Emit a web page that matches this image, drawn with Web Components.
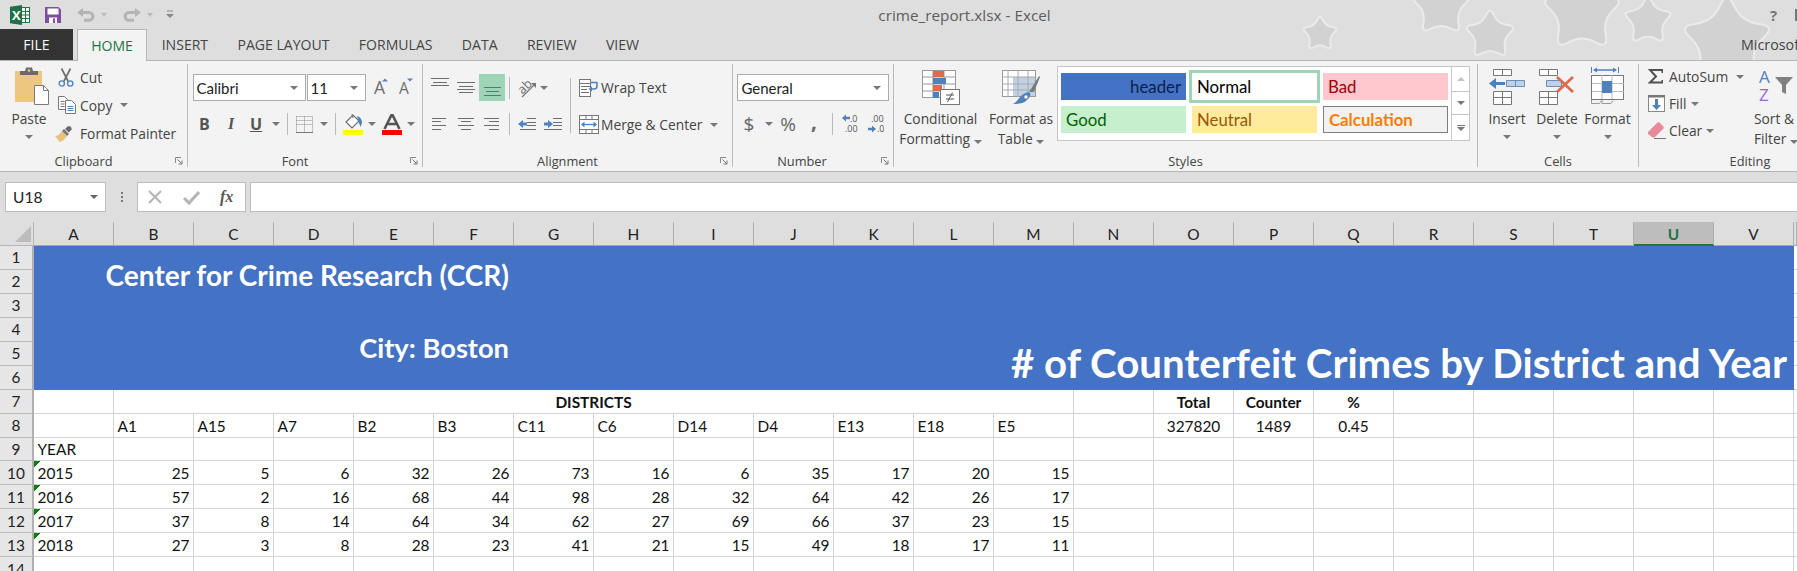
<!DOCTYPE html>
<html>
<head>
<meta charset="utf-8">
<title>crime_report.xlsx - Excel</title>
<style>
html, body { margin: 0; width: 1797px; height: 571px; overflow: hidden; background: #dedede; }
body { font-family: "Open Sans", "Liberation Sans", sans-serif; display: flex; flex-direction: column; }
</style>
</head>
<body>
<xl-header></xl-header>
<xl-ribbon></xl-ribbon>
<xl-formula-bar></xl-formula-bar>
<xl-sheet></xl-sheet>

<script>
const star = (cx, cy, r) => {
    // rounded five point star: curves through the midpoints of a spiky outline
    const pts = [];
    for (let i = 0; i < 10; i++) {
        const a = -Math.PI / 2 + i * Math.PI / 5;
        const d = i % 2 ? r * 0.62 : r * 1.3;
        pts.push([cx + d * Math.cos(a), cy + d * Math.sin(a)]);
    }
    const mid = (p, q) => [(p[0] + q[0]) / 2, (p[1] + q[1]) / 2];
    const start = mid(pts[9], pts[0]);
    let d = `M${start[0].toFixed(1)} ${start[1].toFixed(1)}`;
    pts.forEach((p, i) => {
        const m = mid(p, pts[(i + 1) % 10]);
        d += `Q${p[0].toFixed(1)} ${p[1].toFixed(1)} ${m[0].toFixed(1)} ${m[1].toFixed(1)}`;
    });
    return `<path d="${d}Z"/>`;
};

class XlHeader extends HTMLElement {
    constructor() {
        super();
        this.attachShadow({ mode: 'open' });
        const tabs = ['INSERT', 'PAGE LAYOUT', 'FORMULAS', 'DATA', 'REVIEW', 'VIEW'];
        this.shadowRoot.innerHTML = `
            <style>
                :host { display: block; height: 60px; position: relative; background: #dedede; color: #444; font-size: 13.6px; }
                .stars { position: absolute; left: 0; top: 0; fill: #d2d2d2; stroke: #ebebeb; stroke-width: 2; }
                .title { position: relative; height: 29px; display: flex; align-items: center; }
                .qat { display: flex; align-items: center; width: 0; white-space: nowrap; }
                .qat > * { flex: none; }
                .name { flex: 1; text-align: center; color: #5c5c5c; font-size: 15.3px; margin-left: 159px; }
                .help { color: #777; font-weight: 700; font-size: 15px; width: 27px; display: flex; justify-content: space-between; align-items: center; }
                .help i { width: 2px; height: 12px; background: #777; }
                .caret { display: inline-block; border: 3.5px solid transparent; border-top: 4px solid #bbb; border-bottom: 0; }
                .strip { position: relative; height: 31px; display: flex; align-items: stretch; }
                .tab { display: flex; align-items: center; padding: 0 14.7px; color: #444; white-space: nowrap; font-size: 14.05px; }
                .file { width: 73px; box-sizing: border-box; justify-content: center; background: #333; color: #fff; padding: 0; }
                .home { width: 70px; box-sizing: border-box; justify-content: center; padding: 0; margin: 0 0 -1px 4px; background: #f3f3f3; color: #217346;
                        border: 1px solid #b5b5b5; border-bottom: 0; position: relative; z-index: 1; }
                .account { margin-left: auto; width: 56px; overflow: hidden; align-self: center; white-space: nowrap; color: #444; font-size: 14.3px; }
            </style>
            <svg class="stars" width="1797" height="60">
                ${star(1320, 34, 15.5)}${star(1441, 7, 26)}${star(1490, 35, 22)}${star(1582, 13, 35)}${star(1648, 21, 21.5)}${star(1727, 42, 40)}
            </svg>
            <div class="title">
                <div class="qat">
                    <svg style="margin-left:10px" width="20" height="20" viewBox="0 0 20 20">
                        <rect x="9" y="2.5" width="10.5" height="15" fill="#fff" stroke="#217346"/>
                        <path d="M12 6.5h7M12 10h7M12 13.5h7M15.5 3v14" stroke="#217346" fill="none"/>
                        <path d="M0 1.8 12 0v20L0 18.2z" fill="#1e7145"/>
                        <text x="2" y="14.8" fill="#fff" font-size="13" font-weight="700" font-family="Open Sans">X</text>
                    </svg>
                    <svg style="margin-left:15px" width="16" height="16" viewBox="0 0 16 16">
                        <path d="M0 0h13.5L16 2.5V16H0z" fill="#80509f"/>
                        <rect x="2.5" y="1.5" width="11" height="6" fill="#fff"/>
                        <rect x="4" y="10.5" width="8" height="5.5" fill="#fff"/><rect x="8" y="11.5" width="2" height="4.5" fill="#80509f"/>
                    </svg>
                    <svg style="margin-left:16px" width="18" height="14" viewBox="0 0 18 14">
                        <path d="M5 4.5h7a3.8 3.8 0 0 1 0 7.8H7" stroke="#b4b4b4" stroke-width="3" fill="none"/><path d="M0 4.5 6 0v9z" fill="#b4b4b4"/>
                    </svg>
                    <span class="caret" style="margin-left:6px"></span>
                    <svg style="margin-left:16px" width="18" height="14" viewBox="0 0 18 14">
                        <path d="M13 4.5H6a3.8 3.8 0 0 0 0 7.8h5" stroke="#b4b4b4" stroke-width="3" fill="none"/><path d="M18 4.5 12 0v9z" fill="#b4b4b4"/>
                    </svg>
                    <span class="caret" style="margin-left:6px"></span>
                    <svg style="margin-left:13px" width="9" height="9" viewBox="0 0 9 9"><path d="M1 1h6" stroke="#888"/><path d="M0 4h8L4 8z" fill="#888"/></svg>
                </div>
                <div class="name">crime_report.xlsx - Excel</div>
                <div class="help"><span>?</span><i></i></div>
            </div>
            <div class="strip">
                <div class="tab file">FILE</div>
                <div class="tab home">HOME</div>
                ${tabs.map(t => `<div class="tab">${t}</div>`).join('')}
                <div class="account">Microsoft</div>
            </div>
        `;
    }
}
customElements.define('xl-header', XlHeader);

class XlGroup extends HTMLElement {
    constructor() {
        super();
        this.attachShadow({ mode: 'open' });
        const launcher = this.hasAttribute('launcher') ? `
            <svg class="launch" width="8" height="8" viewBox="0 0 8 8"><path d="M.5 6V.5H6" stroke="#888" fill="none"/><path d="M2.5 2.5l4 4M7 3.5V7H3.5" stroke="#777" fill="none"/></svg>` : '';
        this.shadowRoot.innerHTML = `
            <style>
                :host { display: flex; flex-direction: column; flex: none; box-sizing: border-box; height: 103px; border-right: 1px solid #b9b9b9; }
                :host([last]) { border-right: 0; }
                .body { height: 87px; }
                .foot { height: 16px; line-height: 20px; position: relative; text-align: center; font-size: 12.8px; color: #444; }
                .launch { position: absolute; right: 4px; top: 6px; }
            </style>
            <div class="body"><slot></slot></div>
            <div class="foot" style="${this.getAttribute('foot') || ''}">${this.getAttribute('label')}${launcher}</div>
        `;
    }
}
customElements.define('xl-group', XlGroup);

const lines = (w, h, rows) => `<svg width="${w}" height="${h}" viewBox="0 0 ${w} ${h}">${rows.map(r => `<path d="M${r[0]} ${r[2]}.5H${r[1]}" stroke="${r[3] || '#6e6e6e'}"/>`).join('')}</svg>`;

const icons = {
    paste: `<svg style="margin-left:6px" width="36" height="38" viewBox="0 0 36 38">
        <rect x="1" y="4" width="27" height="31" fill="#edc77f"/>
        <path d="M6 8V4h5l1-3.5h6L19 4h5v4z" fill="#6b6b6b"/><circle cx="15" cy="3.5" r="1.3" fill="#edc77f"/>
        <path d="M20.5 18.5h9l5 5v14h-14z" fill="#fff" stroke="#7a7a7a"/><path d="M29.5 18.5v5h5" fill="none" stroke="#7a7a7a"/></svg>`,
    cut: `<svg width="16" height="19" viewBox="0 0 16 19">
        <path d="M3.5 .5 10 13M12.5 .5 6 13" stroke="#6f6f6f" stroke-width="1.7" fill="none"/>
        <circle cx="3.8" cy="15.5" r="2.6" fill="none" stroke="#4f81bd" stroke-width="1.4"/><circle cx="12.2" cy="15.5" r="2.6" fill="none" stroke="#4f81bd" stroke-width="1.4"/></svg>`,
    copy: `<svg width="18" height="18" viewBox="0 0 18 18">
        <path d="M.5 .5h6l3 3v10H.5z" fill="#fff" stroke="#777"/><path d="M2.5 5.5h4M2.5 8h4M2.5 10.5h4" stroke="#777"/>
        <path d="M7.5 4.5h6l4 4v9H7.5z" fill="#fff" stroke="#777"/><path d="M9.5 10.5h6M9.5 12.5h6M9.5 14.5h6" stroke="#4f81bd"/></svg>`,
    painter: `<svg width="19" height="17" viewBox="0 0 19 17">
        <path d="M0 11c3 0 5-2 7-5l5 5c-2 3-4 5-7 6-.5-1-1-1-1.5-1 0-1-1-2-3.5-5z" fill="#e8c17c"/>
        <path d="M7 6l5 5 2-2-5-5z" fill="#777"/><path d="M10 4l3-3 3 .8.8 2.7-3 3z" fill="#6b6b6b"/></svg>`,
    grow: `<svg width="15" height="20" viewBox="0 0 15 20"><text x="0" y="16" font-size="17.5" fill="#6e6e6e" font-family="Open Sans">A</text><path d="M8 3.5 11 .5l3 3z" fill="#4f81bd"/></svg>`,
    shrink: `<svg width="15" height="20" viewBox="0 0 15 20"><text x="0" y="16" font-size="15.5" fill="#6e6e6e" font-family="Open Sans">A</text><path d="M8 .5h6l-3 3z" fill="#4f81bd"/></svg>`,
    borders: `<svg width="17" height="17" viewBox="0 0 17 17"><path d="M.5 .5h16M.5 4.5h16M.5 8.5h16M.5 .5v16M8.5 .5v16M16.5 .5v16" stroke="#8a8a8a" stroke-dasharray="1 1" fill="none"/><path d="M0 16.5h17" stroke="#777"/></svg>`,
    fill: `<svg width="20" height="21" viewBox="0 0 20 21">
        <path d="M3 8 10 1l6 6-7 7z" fill="#fff" stroke="#6e6e6e" stroke-width="1.2"/><path d="M9 0l1 4" stroke="#6e6e6e"/><path d="M14 2c3 1 5 3 5 7l-1.5 4L16 9z" fill="#4f81bd"/>
        <rect y="16" width="20" height="5" fill="#ffff00"/></svg>`,
    color: `<svg width="20" height="21" viewBox="0 0 20 21"><path d="M2.5 15 10 0l7.5 15M5 10h10" fill="none" stroke="#555" stroke-width="2.6"/><rect y="16" width="20" height="5" fill="#ff0000"/></svg>`,
    orient: `<svg width="20" height="20" viewBox="0 0 20 20"><g transform="rotate(-45 9 9)"><text x="1" y="12" font-size="12.5" fill="#6e6e6e" font-family="Open Sans">ab</text></g><path d="M5 19 18 6" stroke="#777" stroke-width="1.3"/><path d="M14 5h5v5z" fill="#777"/></svg>`,
    indentL: `<svg width="18" height="12" viewBox="0 0 18 12"><path d="M9 .5h9M9 4.5h9M9 7.5h9M2 11.5h16" stroke="#6e6e6e"/><path d="M0 6l5-4v2.5h4v3H5V10z" fill="#4f81bd"/></svg>`,
    indentR: `<svg width="18" height="12" viewBox="0 0 18 12"><path d="M9 .5h9M9 4.5h9M9 7.5h9M0 11.5h18" stroke="#6e6e6e"/><path d="M9 6 4 2v2.5H0v3h4V10z" fill="#4f81bd"/></svg>`,
    wrap: `<svg width="20" height="18" viewBox="0 0 20 18"><rect x=".5" y=".5" width="11" height="17" fill="#fff" stroke="#777"/><path d="M.5 4.5h11" stroke="#777"/><path d="M2 7.5h10M2 10.5h6M2 13.5h8" stroke="#6e6e6e"/><path d="M11 3.5h7M18 3v4a3 3 0 0 1-3 3h-3" stroke="#4f81bd" stroke-width="1.5" fill="none"/><path d="M9.5 10 13 7.5v5z" fill="#4f81bd"/></svg>`,
    merge: `<svg width="20" height="19" viewBox="0 0 20 19"><rect x=".5" y=".5" width="19" height="18" fill="#fff" stroke="#777"/><path d="M.5 4.5h19M.5 14.5h19M7 .5v4M13 .5v4M7 14.5v4M13 14.5v4" stroke="#777"/><path d="M3.5 9.5h13" stroke="#4f81bd" stroke-width="1.3"/><path d="M2 9.5l3.5-3v6zM18 9.5l-3.5-3v6z" fill="#4f81bd"/></svg>`,
    decMore: `<svg width="16" height="24" viewBox="0 0 16 24" font-family="Open Sans" font-size="9" fill="#555"><path d="M0 6l4-3.5v2.3h4v2.4H4v2.3z" fill="#4f81bd"/><text x="8" y="10">.0</text><text x="3" y="20">.00</text></svg>`,
    decLess: `<svg width="16" height="24" viewBox="0 0 16 24" font-family="Open Sans" font-size="9" fill="#555"><text x="3" y="10">.00</text><path d="M8 17l-4-3.5v2.3H0v2.4h4v2.300z" fill="#4f81bd"/><text x="9" y="20">.0</text></svg>`,
    cond: `<svg width="38" height="35" viewBox="0 0 38 35">
        <rect x=".5" y=".5" width="33" height="27" fill="#fff" stroke="#999"/>
        <path d="M0 7h33M0 14h33M0 21h33M11 0v28M22 0v28" stroke="#999" fill="none"/>
        <rect x="11" y="1" width="11" height="6" fill="#dd6b4b"/><rect x="11" y="8" width="13" height="6" fill="#4f81bd"/><rect x="11" y="15" width="9" height="6" fill="#dd6b4b"/><rect x="11" y="22" width="6" height="6" fill="#4f81bd"/>
        <rect x="18.5" y="19.5" width="19" height="15" fill="#fff" stroke="#777"/><path d="M24 25h8M24 29h8M30.5 22.5 25.5 32" stroke="#555" fill="none"/></svg>`,
    table: `<svg width="38" height="35" viewBox="0 0 38 35">
        <rect x=".5" y=".5" width="33" height="26" fill="#fff" stroke="#999"/>
        <path d="M11 7h22v19H11z" fill="#c0d1e6"/><path d="M0 7h33M0 14h33M0 20h33M6 0v27M16 0v27M26 0v27" stroke="#aaa" fill="none"/>
        <path d="M27 22 37 6l1 1-6 15z" fill="#7a7a7a"/><path d="M11 34c3-1 5-5 8-8 2-2 8-5 9-3 1 3-1 5-3 7-2 3-8 4-14 4z" fill="#4f81bd"/><circle cx="24" cy="27" r="2.2" fill="#fff" stroke="#4f81bd"/></svg>`,
    insert: `<svg width="36" height="36" viewBox="0 0 36 36">
        <path d="M4.5 .5h18v6h-18zM13.5 .5v6M4.5 22.5h18v13h-18zM4.5 28.5h18M13.5 22.5v13" fill="#fff" stroke="#777"/>
        <path d="M17.5 11.5h18v6h-18zM26.5 11.5v6" fill="#c0d1e6" stroke="#6e8fb5"/>
        <path d="M0 14.5 7 9v4h9v3H7v4z" fill="#4f81bd"/></svg>`,
    del: `<svg width="36" height="36" viewBox="0 0 36 36">
        <path d="M.5 .5h18v6H.5zM9.5 .5v6M.5 22.5h18v13H.5zM.5 28.5h18M9.5 22.5v13" fill="#fff" stroke="#777"/>
        <path d="M7.5 11.5h15v6h-15z" fill="#c0d1e6" stroke="#6e8fb5"/>
        <path d="M18 8 34 23M34 8 18 23" stroke="#dd6b4b" stroke-width="2.8" fill="none"/></svg>`,
    format: `<svg width="34" height="38" viewBox="0 0 34 38">
        <path d="M.5 0v6M27.5 0v6" stroke="#4f81bd"/><path d="M3 3h22" stroke="#4f81bd" stroke-width="1.5"/><path d="M2 3l4-2.5v5zM26 3l-4-2.5v5z" fill="#4f81bd"/>
        <rect x=".5" y="8.5" width="32" height="24" fill="#fff" stroke="#777"/>
        <path d="M11 8v24M21 8v24M1 16.5h32M1 24.5h32" stroke="#bbb"/><rect x="11" y="14" width="10" height="12" fill="#4f81bd"/>
        <path d="M.5 33v3.5h8l2-3M11 33v3.5h9l2-3" fill="none" stroke="#999"/></svg>`,
    sigma: `<svg width="15" height="15" viewBox="0 0 15 15"><path d="M14.5 4V1H2l6 6.5L2 13.5h12.5V11" fill="none" stroke="#505050" stroke-width="2"/></svg>`,
    down: `<svg width="17" height="17" viewBox="0 0 17 17"><rect x=".5" y=".5" width="16" height="16" fill="#fff" stroke="#888"/><rect width="17" height="2.5" fill="#777"/><path d="M7 4h3v6h3l-4.5 5L4 10h3z" fill="#4f81bd"/></svg>`,
    eraser: `<svg width="18" height="17" viewBox="0 0 18 17"><path d="M0 10 9 1c1-1 2-1 3 0l3 3c1 1 1 2 0 3l-8 8c-1 1-2 1-3 0l-4-3c-.5-.5-.5-1.5 0-2z" fill="#e88a9a"/><path d="M6 16.5h12" stroke="#777"/></svg>`,
    sort: `<svg width="36" height="33" viewBox="0 0 36 33" font-family="Open Sans" font-size="17" font-weight="400"><text x="0" y="14" fill="#4f81bd">A</text><text x="0" y="32" fill="#9a6bb8">Z</text><path d="M16 8h18l-7 8v9l-4-2v-7z" fill="#808080"/></svg>`
};

const al = {
    top: lines(19, 27, [[0, 18, 4], [2, 16, 8], [0, 18, 11]]),
    mid: lines(19, 27, [[0, 18, 8], [2, 16, 12], [0, 18, 15], [2, 16, 18]]),
    bot: lines(19, 27, [[1, 18, 13], [3, 16, 17], [1, 18, 21]]),
    left: lines(16, 12, [[0, 14, 0], [0, 9, 3], [0, 14, 7], [0, 9, 11]]),
    center: lines(17, 12, [[0, 16, 0], [3, 13, 3], [0, 16, 7], [3, 13, 11]]),
    right: lines(16, 12, [[0, 15, 0], [5, 15, 3], [0, 15, 7], [5, 15, 11]])
};

const caret = '<span class="caret"></span>';
const slot = (w, html = '') => `<span class="s" style="width:${w}px">${html}</span>`;
const sep = w => slot(w, '<span class="v"></span>');
const combo = (w, text) => `<div class="combo" style="width:${w}px"><span>${text}</span>${caret}</div>`;
const big = (w, icon, text, tail) => `<div class="big" style="width:${w}px"><div class="ic">${icon}</div><div class="t">${text}</div>${tail}</div>`;
const tailCaret = '<div class="tc">' + caret + '</div>';

class XlRibbon extends HTMLElement {
    constructor() {
        super();
        this.attachShadow({ mode: 'open' });
        this.shadowRoot.innerHTML = `
            <style>
                :host { display: flex; box-sizing: border-box; height: 112px; padding-top: 3px; background: #f3f3f3; flex: none;
                        border-top: 1px solid #b5b5b5; border-bottom: 1px solid #b5b5b5; color: #444; font-size: 13.8px; overflow: hidden; }
                .caret { display: inline-block; flex: none; border: 4px solid transparent; border-top: 4px solid #777; border-bottom: 0; }
                .s { display: inline-flex; align-items: center; justify-content: center; flex: none; height: 100%; }
                .v { width: 1px; height: 100%; background: #b9b9b9; }
                .row { display: flex; align-items: center; }
                .r1 { height: 27px; margin-top: 10px; }
                .r2 { height: 22px; margin-top: 12px; }
                .combo { box-sizing: border-box; height: 27px; display: flex; align-items: center; justify-content: space-between; flex: none;
                         background: #fff; border: 1px solid #ababab; padding: 0 7px 0 3px; color: #222; font: 15px Lato, sans-serif; }
                .big { display: flex; flex-direction: column; align-items: center; flex: none; line-height: 20px; white-space: nowrap; }
                .ic { height: 45px; display: flex; align-items: flex-end; padding-bottom: 4px; box-sizing: border-box; }
                .tc { height: 16px; display: flex; align-items: center; }
                .t { height: 20px; }
                .stack { display: grid; grid-auto-rows: 28px; }
                .item { display: flex; align-items: center; white-space: nowrap; }
                .item .i { width: 22px; display: flex; flex: none; }
                .item .caret { margin-left: 8px; }
                .clip { display: flex; padding-left: 11px; }
                .letter { font-family: "Open Sans", sans-serif; font-size: 16px; color: #555; }
                .sym { font-size: 19px; color: #666; }
                .on { background: #9fd5b7; align-self: stretch; height: 27px; }
                .alignWrap { display: flex; }
                .right { border-left: 1px solid #b9b9b9; margin-top: 14px; height: 55px; padding-left: 8px; width: 160px; box-sizing: border-box; }
                .right .item { height: 27px; margin-top: -4px; margin-bottom: 14px; }
                .right .item:last-child { margin-top: -4px; }
                .right .i { width: 22px; }
                .styles { display: flex; padding-left: 3px; }
                .gallery { box-sizing: border-box; width: 413px; height: 75px; margin-top: 2px; background: #fff; border: 1px solid #c6c6c6; display: flex; flex: none; }
                .cells { display: grid; grid-template-columns: repeat(3, 125px); grid-auto-rows: 27px; gap: 6px; padding: 6px 0 0 3px; width: 393px; box-sizing: border-box; flex: none; }
                .sc { box-sizing: border-box; display: flex; align-items: center; padding: 0 5px 1px; font: 16.8px Lato, sans-serif; }
                .scroll { width: 18px; flex: none; display: grid; grid-template-rows: 25px 23px 1fr; border-left: 1px solid #c6c6c6; box-sizing: border-box; margin-left: auto; }
                .scroll div { display: flex; flex-direction: column; gap: 1px; align-items: center; justify-content: center; border-bottom: 1px solid #c6c6c6; }
                .scroll div:last-child { border-bottom: 0; }
                .up { border: 4px solid transparent; border-bottom: 4px solid #c4c4c4; border-top: 0; }
                .bar { width: 8px; height: 1px; background: #777; }
                .cellBtns { display: flex; padding-left: 4px; }
                .edit { display: flex; padding-left: 9px; }
                .edit .stack { grid-auto-rows: 27px; width: 106px; margin-top: -1px; }
                .edit .stack .i { width: 21px; }
                .sortBtn { align-items: flex-start; }
            </style>

            <xl-group label="Clipboard" launcher style="width:188px" foot="padding-right:20px">
                <div class="clip">
                    ${big(36, icons.paste, 'Paste', tailCaret)}
                    <div class="stack" style="margin:-1px 0 0 11px">
                        <div class="item"><span class="i">${icons.cut}</span>Cut</div>
                        <div class="item"><span class="i">${icons.copy}</span>Copy${caret}</div>
                        <div class="item"><span class="i" style="margin-left:-3px;width:25px">${icons.painter}</span>Format Painter</div>
                    </div>
                </div>
            </xl-group>

            <xl-group label="Font" launcher style="width:235px" foot="padding-right:20px">
                <div class="row r1" style="padding-left:4.5px">
                    ${combo(113, 'Calibri')}<span style="width:1px"></span>${combo(59.5, '11')}
                    ${slot(31, icons.grow)}${slot(19, icons.shrink)}
                </div>
                <div class="row r2" style="padding-left:4.5px">
                    ${slot(23.5, '<b class="letter">B</b>')}${slot(30, '<b class="letter" style="font-style:italic;font-family:Liberation Serif">I</b>')}
                    ${slot(20, '<b class="letter" style="text-decoration:underline">U</b>')}${slot(19, caret)}${sep(4)}
                    ${slot(31, icons.borders)}${slot(8, caret)}${slot(5)}${sep(4)}
                    ${slot(31, icons.fill)}${slot(8, caret)}${slot(31, icons.color)}${slot(8, caret)}
                </div>
            </xl-group>

            <xl-group label="Alignment" launcher style="width:310px" foot="padding-right:20px">
                <div class="alignWrap">
                    <div style="width:147px;padding-left:4px;box-sizing:border-box">
                        <div class="row r1">
                            ${slot(26, al.top)}${slot(26, al.mid)}${slot(26, al.bot).replace('class="s"', 'class="s on"')}
                            ${slot(8, '<span class="v" style="height:22px"></span>')}${slot(27, icons.orient)}${slot(8, caret)}
                        </div>
                        <div class="row r2">
                            ${slot(26, al.left)}${slot(26, al.center)}${slot(26, al.right)}${sep(8)}${slot(27, icons.indentL)}${slot(26, icons.indentR)}
                        </div>
                    </div>
                    <div class="right">
                        <div class="item"><span class="i">${icons.wrap}</span>Wrap Text</div>
                        <div class="item"><span class="i">${icons.merge}</span>Merge &amp; Center${caret}</div>
                    </div>
                </div>
            </xl-group>

            <xl-group label="Number" launcher style="width:161px" foot="padding-right:22px">
                <div class="row r1" style="padding-left:4.4px">${combo(151.6, 'General')}</div>
                <div class="row r2">
                    ${slot(32, '<span class="sym">$</span>')}${slot(8, caret)}${slot(30, '<span class="sym">%</span>')}
                    ${slot(22, '<b class="sym" style="font-size:21px;margin-top:-7px">,</b>')}${slot(14, '<span class="v"></span>')}
                    ${slot(21, icons.decMore)}${slot(31, icons.decLess)}
                </div>
            </xl-group>

            <xl-group label="Styles" style="width:584px">
                <div class="styles">
                    ${big(87, icons.cond, 'Conditional', `<div class="t">Formatting ${caret}</div>`)}
                    ${big(74, icons.table, 'Format as', `<div class="t">Table ${caret}</div>`)}
                    <div class="gallery" style="margin-left:-1px">
                        <div class="cells">
                            <div class="sc" style="background:#4472c4;color:#0b1f4d;justify-content:flex-end">header</div>
                            <div class="sc" style="background:#fff;color:#000;box-shadow:0 0 0 3px #9fd5b7">Normal</div>
                            <div class="sc" style="background:#ffc7ce;color:#9c0006">Bad</div>
                            <div class="sc" style="background:#c6efce;color:#006100">Good</div>
                            <div class="sc" style="background:#ffeb9c;color:#9c5700">Neutral</div>
                            <div class="sc" style="background:#f2f2f2;color:#fa7d00;font-weight:700;border:1px solid #7f7f7f">Calculation</div>
                        </div>
                        <div class="scroll">
                            <div><span class="up"></span></div>
                            <div>${caret}</div>
                            <div><span class="bar"></span>${caret}</div>
                        </div>
                    </div>
                </div>
            </xl-group>

            <xl-group label="Cells" style="width:161px">
                <div class="cellBtns">
                    ${big(50, icons.insert, 'Insert', tailCaret)}
                    ${big(50, icons.del, 'Delete', tailCaret)}
                    ${big(51, icons.format, 'Format', tailCaret)}
                </div>
            </xl-group>

            <xl-group label="Editing" last style="width:160px" foot="padding-left:62px">
                <div class="edit">
                    <div class="stack">
                        <div class="item"><span class="i">${icons.sigma}</span>AutoSum${caret}</div>
                        <div class="item"><span class="i">${icons.down}</span>Fill<span class="caret" style="margin-left:4px"></span></div>
                        <div class="item"><span class="i">${icons.eraser}</span>Clear<span class="caret" style="margin-left:4px"></span></div>
                    </div>
                    <div class="big sortBtn" style="width:44px">
                        <div class="ic" style="padding-left:5px;padding-bottom:7px">${icons.sort}</div><div class="t">Sort &amp;</div><div class="t">Filter ${caret}</div>
                    </div>
                </div>
            </xl-group>
        `;
    }
}
customElements.define('xl-ribbon', XlRibbon);

class XlFormulaBar extends HTMLElement {
    constructor() {
        super();
        this.attachShadow({ mode: 'open' });
        this.shadowRoot.innerHTML = `
            <style>
                :host { display: flex; flex: none; align-items: center; box-sizing: border-box; height: 50px; padding: 0 0 0 5px; background: #dedede; }
                .box { box-sizing: border-box; height: 30px; background: #fff; border: 1px solid #bdbdbd; display: flex; align-items: center; flex: none; }
                .name { width: 101px; padding: 0 7px; justify-content: space-between; font: 15.5px Lato, sans-serif; color: #222; }
                .caret { border: 4px solid transparent; border-top: 4px solid #666; border-bottom: 0; }
                .dots { width: 31px; display: flex; flex-direction: column; gap: 2px; align-items: center; flex: none; }
                .dots i { width: 2px; height: 2px; background: #777; }
                .fx { width: 109px; gap: 0; padding-left: 9px; }
                .fx span { font: italic 700 16px "Liberation Serif", serif; color: #555; margin-left: 20px; }
                .input { flex: 1; margin-left: 4px; border-right: 0; }
            </style>
            <div class="box name"><span>U18</span><span class="caret"></span></div>
            <div class="dots"><i></i><i></i><i></i></div>
            <div class="box fx">
                <svg width="16" height="16" viewBox="0 0 16 16"><path d="M2 2l12 12M14 2 2 14" stroke="#b4b4b4" stroke-width="2"/></svg>
                <svg style="margin-left:20px" width="17" height="15" viewBox="0 0 17 15"><path d="M1 8l5 5L16 2" stroke="#b4b4b4" stroke-width="3" fill="none"/></svg>
                <span>fx</span>
            </div>
            <div class="box input"></div>
        `;
    }
}
customElements.define('xl-formula-bar', XlFormulaBar);

const COLS = 'ABCDEFGHIJKLMNOPQRSTUV'.split('');
const DISTRICTS = ['A1', 'A15', 'A7', 'B2', 'B3', 'C11', 'C6', 'D14', 'D4', 'E13', 'E18', 'E5'];
const YEARS = {
    2015: [25, 5, 6, 32, 26, 73, 16, 6, 35, 17, 20, 15],
    2016: [57, 2, 16, 68, 44, 98, 28, 32, 64, 42, 26, 17],
    2017: [37, 8, 14, 64, 34, 62, 27, 69, 66, 37, 23, 15],
    2018: [27, 3, 8, 28, 23, 41, 21, 15, 49, 18, 17, 11]
};

class XlSheet extends HTMLElement {
    constructor() {
        super();
        this.attachShadow({ mode: 'open' });
        this.shadowRoot.innerHTML = `
            <style>
                :host { display: grid; flex: none; height: 349px; overflow: hidden; background: #fff; color: #111;
                        grid-template-columns: 34px repeat(22, 80px) 3px; grid-template-rows: 24px repeat(14, 23.95px);
                        font: 15.4px Lato, sans-serif; }
                .corner { background: #dedede; border-right: 1px solid #b5b5b5; border-bottom: 1px solid #b5b5b5; display: flex; }
                .corner i { width: 16px; height: 16px; margin: 4px 0 0 15px; background: #bdbdbd; clip-path: polygon(100% 0, 100% 100%, 0 100%); }
                .ch { display: flex; align-items: center; justify-content: center; background: #dedede; border-right: 1px solid #b0b0b0; border-bottom: 1px solid #a6a6a6; padding-top: 1px; box-sizing: border-box; color: #222; }
                .ch.sel { background: #bdbdbd; color: #217346; font-weight: 700; border-bottom: 2px solid #217346; }
                .rh { display: flex; align-items: center; justify-content: center; background: #e6e6e6; border-right: 2px solid #b0b0b0; border-bottom: 1px solid #b9b9b9; box-sizing: border-box; color: #222; }
                .c { box-sizing: border-box; border-right: 1px solid #d4d4d4; border-bottom: 1px solid #d4d4d4; padding: 0 3.5px; display: flex; align-items: flex-end; line-height: 21px; white-space: nowrap; min-width: 0; }
                .num { justify-content: flex-end; }
                .mid { justify-content: center; }
                .bold { font-weight: 700; }
                .flag { background: linear-gradient(135deg, #0b7a16 4.5px, transparent 4.5px); }
                .blue { background: #4472c4; color: #fff; border: 0; font-weight: 700; justify-content: flex-end; align-items: center; padding: 0 5px 12px 0; font-size: 27.3px; }
                .wide { font-size: 28px; }
                .big { align-items: flex-end; padding: 0 7px 2px 0; font-size: 40.2px; line-height: 50px; }
            </style>
            ${this.build()}
        `;
    }

    // every cell is locked to its row; the column comes from the order
    cell(n, text, cls = '', span = 1) {
        const col = span > 1 ? `;grid-column:span ${span}` : '';
        return `<div class="c ${cls}" style="grid-row:${n + 1}${col}">${text}</div>`;
    }

    empties(n, count) {
        return Array(count).fill(this.cell(n, '')).join('');
    }

    build() {
        let html = '<div class="corner"><i></i></div>';
        html += COLS.map(c => `<div class="ch${c === 'U' ? ' sel' : ''}">${c}</div>`).join('') + '<div class="ch"></div>';

        for (let n = 1; n <= 14; n++) {
            html += `<div class="rh" style="grid-column:1;grid-row:${n + 1}">${n}</div>`;
        }

        // rows 1-6 are one blue banner, merged across the columns
        html += `<div class="c blue wide" style="grid-column:2 / span 6;grid-row:2 / span 3">Center for Crime Research (CCR)</div>`;
        html += `<div class="c blue" style="grid-column:2 / span 6;grid-row:5 / span 3">City: Boston</div>`;
        html += `<div class="c blue big" style="grid-column:8 / span 16;grid-row:2 / span 6"># of Counterfeit Crimes by District and Year</div>`;
        for (let n = 1; n <= 6; n++) {
            html += `<div class="c" style="grid-column:24;grid-row:${n + 1}"></div>`;
        }

        html += this.cell(7, '') + this.cell(7, 'DISTRICTS', 'mid bold', 12) + this.cell(7, '') +
            this.cell(7, 'Total', 'mid bold') + this.cell(7, 'Counter', 'mid bold') + this.cell(7, '%', 'mid bold') + this.empties(7, 6);
        html += this.cell(8, '') + DISTRICTS.map(d => this.cell(8, d)).join('') + this.cell(8, '') +
            this.cell(8, '327820', 'mid') + this.cell(8, '1489', 'mid') + this.cell(8, '0.45', 'mid') + this.empties(8, 6);
        html += this.cell(9, 'YEAR') + this.empties(9, 22);
        Object.entries(YEARS).forEach(([year, vals], i) => {
            const n = 10 + i;
            html += this.cell(n, year, 'flag') + vals.map(v => this.cell(n, v, 'num')).join('') + this.empties(n, 10);
        });
        html += this.empties(14, 23);
        return html;
    }
}
customElements.define('xl-sheet', XlSheet);
</script>
</body>
</html>
